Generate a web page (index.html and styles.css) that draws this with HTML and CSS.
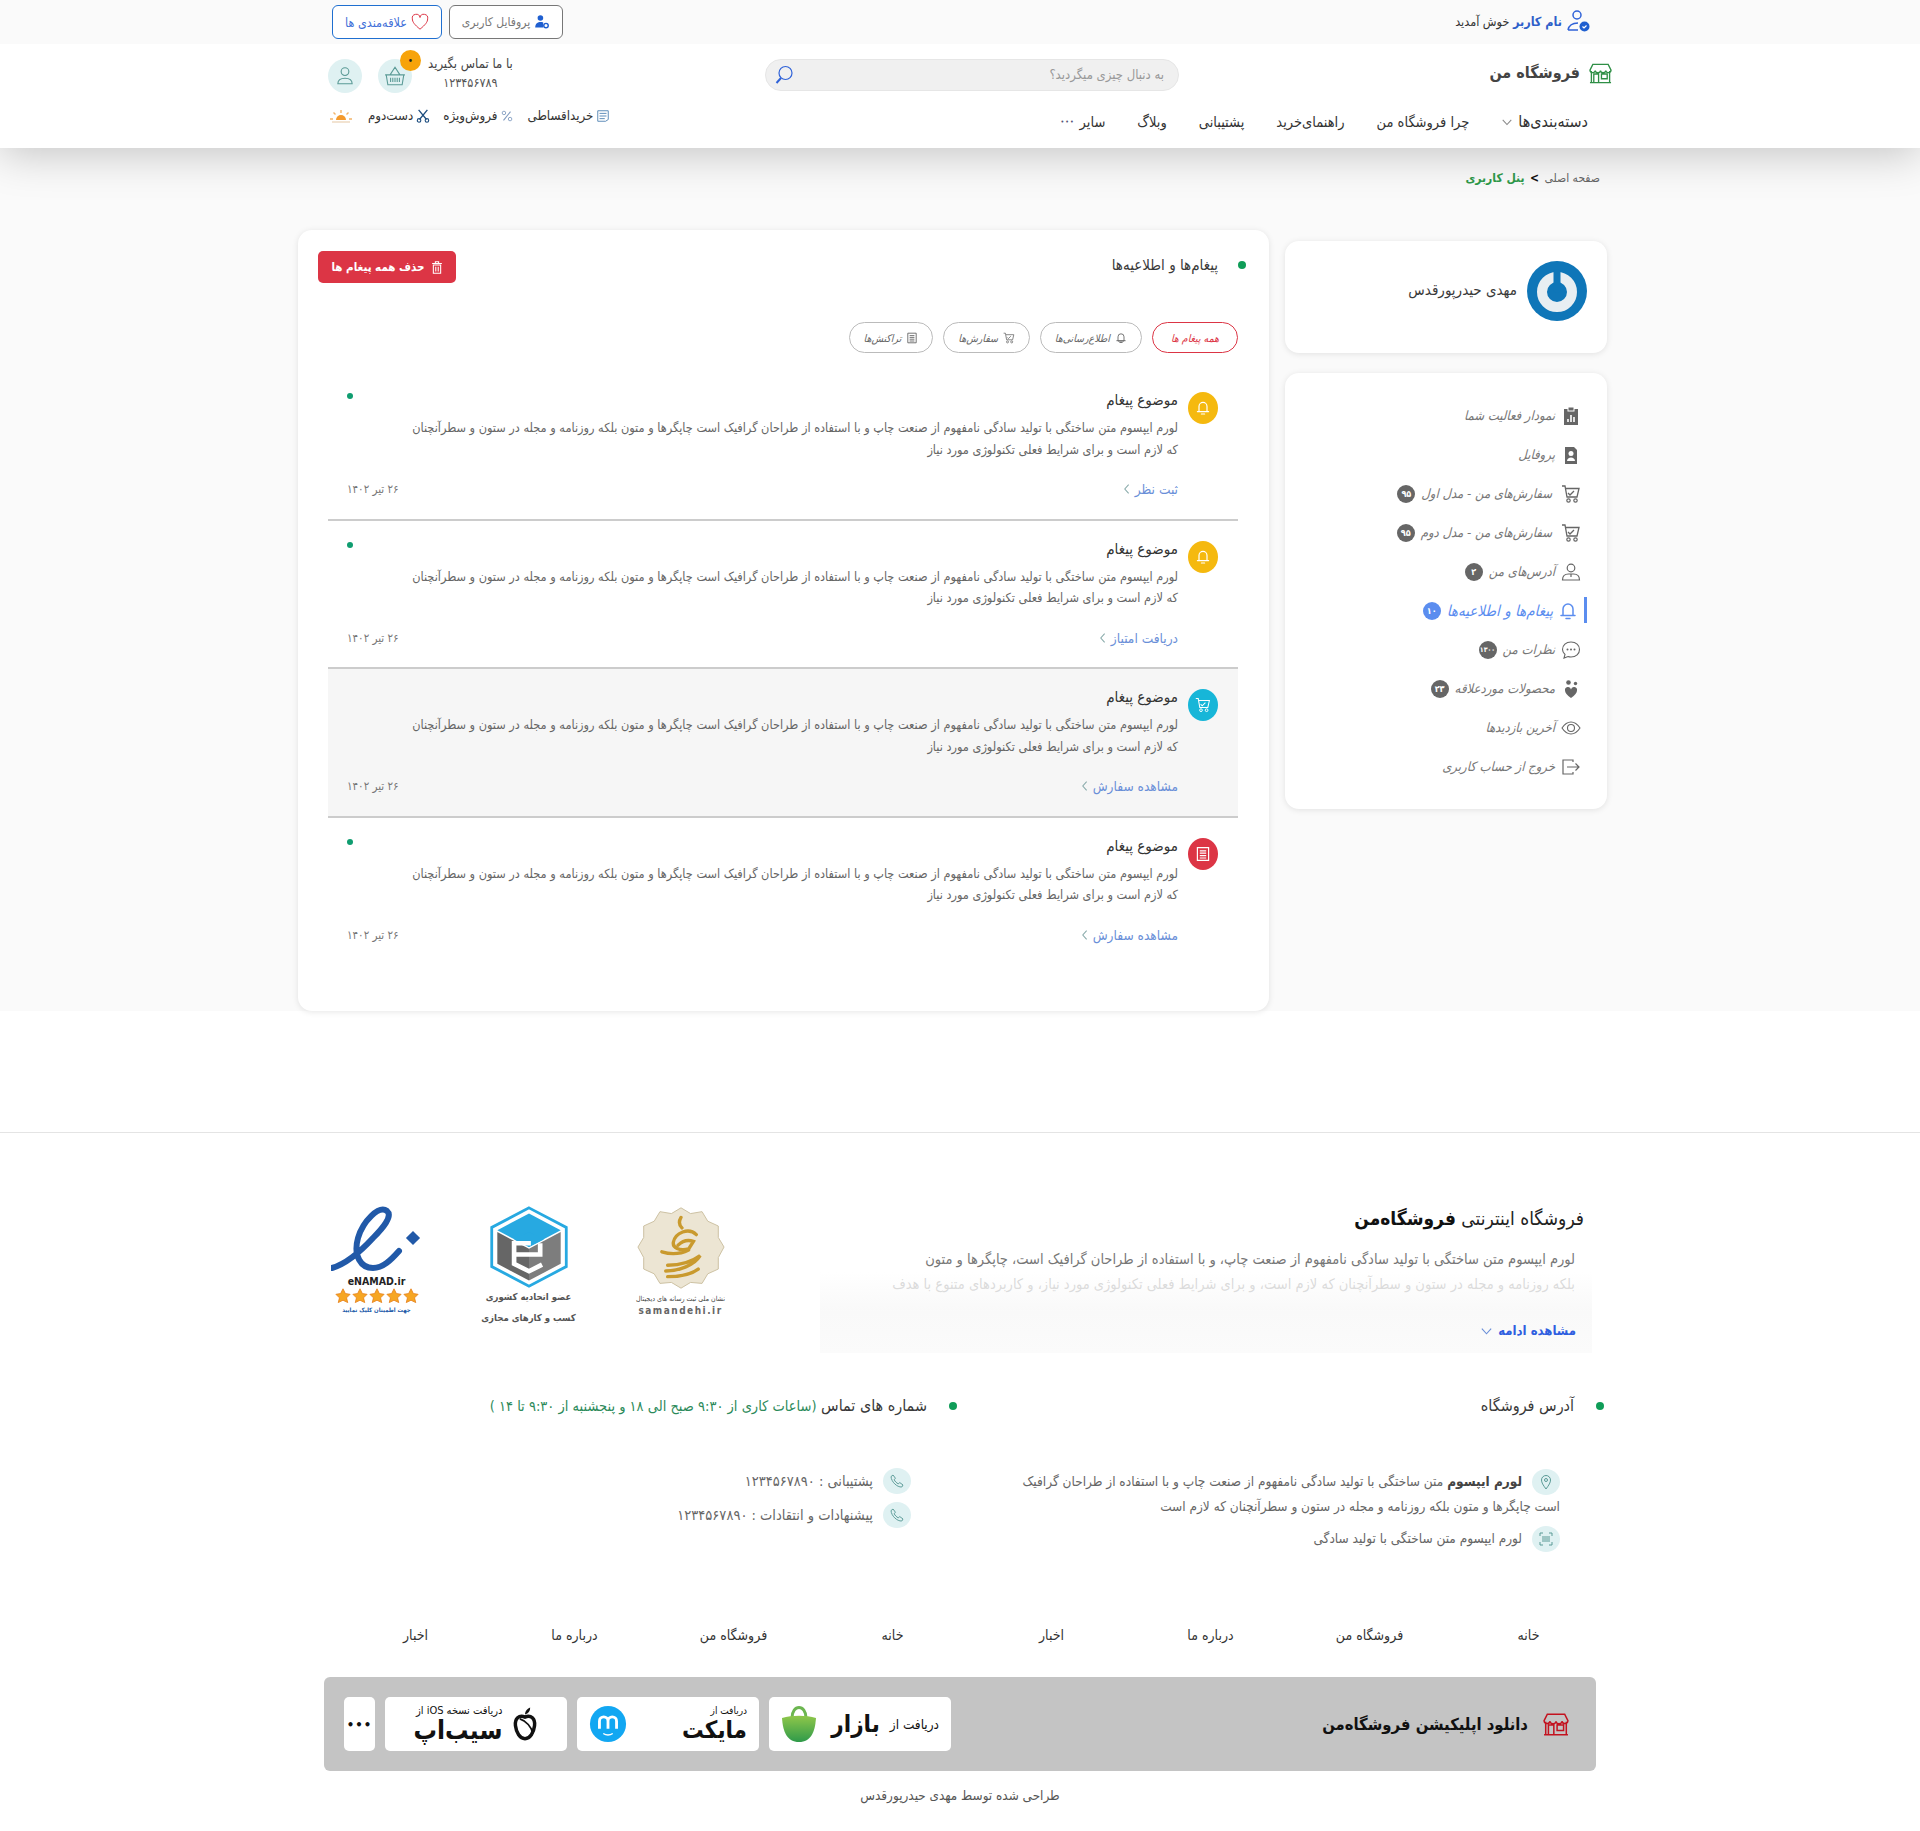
FILE: index.html
```html
<!DOCTYPE html>
<html lang="fa" dir="rtl">
	<head>
	<meta charset="utf-8">
	<title>پنل کاربری</title>
	<link rel="stylesheet" href="styles.css">
	</head>
	<body>
		<svg class="defs" width="0" height="0">
			<symbol id="i-store" viewBox="0 0 24 22"><path d="M1 21h22M2.500 9v12M21.500 9v12M4 2h16l3 6a2.800 2.800 0 0 1-5.500.5 2.800 2.800 0 0 1-5.500 0 2.800 2.800 0 0 1-5.500 0A2.800 2.800 0 0 1 1 8zM5 21v-9h5v9M13 12h6v5h-6z" fill="none" stroke="currentColor" stroke-width="1.400"/></symbol>
			<symbol id="i-bell" viewBox="0 0 20 20"><path d="M5 14.500V8a5 5 0 0 1 10 0v6.500zM3 14.500h14M8 17.500h4" fill="none" stroke="currentColor" stroke-width="1.500" stroke-linecap="round"/></symbol>
			<symbol id="i-cart" viewBox="0 0 20 20"><path d="M1 2h3l2 11h10l2-8.500H5M7 9l2 2 4-4" fill="none" stroke="currentColor" stroke-width="1.300"/><circle cx="7.500" cy="16.500" r="1.700" fill="none" stroke="currentColor" stroke-width="1.200"/><circle cx="14.500" cy="16.500" r="1.700" fill="none" stroke="currentColor" stroke-width="1.200"/></symbol>
			<symbol id="i-receipt" viewBox="0 0 20 20"><path d="M3 2h14v16H3zM6 6h8M6 9h8M6 12h8M6 15h8" fill="none" stroke="currentColor" stroke-width="1.500"/></symbol>
			<symbol id="i-phone" viewBox="0 0 20 20"><path d="M5 2.500l3 4-1.500 2c1 2 3 4 5 5l2-1.500 4 3-1.500 2.500C10 18 3 11 2.500 4.500z" fill="none" stroke="currentColor" stroke-width="1.200" stroke-linejoin="round"/></symbol>
			<symbol id="i-chevron-l" viewBox="0 0 10 14"><path d="M7.500 2L3 7l4.500 5" fill="none" stroke="currentColor" stroke-width="1.200"/></symbol>
			<symbol id="i-chevron-d" viewBox="0 0 14 10"><path d="M2 2.500L7 8l5-5.500" fill="none" stroke="currentColor" stroke-width="1.200"/></symbol>
		</svg>

		<div class="topbar">
			<div class="welcome">
				<svg class="welcome-icon" viewBox="0 0 24 24"><circle cx="11" cy="6" r="4" fill="none" stroke="#2f62d8" stroke-width="1.500"/><path d="M2 21c1-5 5-7 10-7M2 21h10" fill="none" stroke="#2f62d8" stroke-width="1.500"/><circle cx="18.500" cy="17.500" r="5" fill="#1f5fd0"/><path d="M16.500 17.500l1.500 1.500 2.500-2.500" fill="none" stroke="#fff" stroke-width="1.200"/></svg>
				<span><b class="welcome-name">نام کاربر</b> خوش آمدید</span>
			</div>
			<div class="top-btns">
				<a class="top-btn">
					<svg viewBox="0 0 20 20"><circle cx="8" cy="5" r="3.500" fill="#1f5fd0"/><path d="M1.500 17c0-5 3-7 7-7 1 0 2 .2 3 .6V17z" fill="#1f5fd0"/><circle cx="15" cy="14.500" r="2.800" fill="none" stroke="#1f5fd0" stroke-width="1.800"/></svg>
					پروفایل کاربری
				</a>
				<a class="top-btn top-btn-wish">
					<svg viewBox="0 0 20 20"><path d="M10 18C4 13 1.500 10 1.500 6.500A4.300 4.300 0 0 1 10 5a4.300 4.300 0 0 1 8.500 1.500C18.500 10 16 13 10 18z" fill="none" stroke="#dc3545" stroke-width="1.100"/></svg>
					علاقه‌مندی ها
				</a>
			</div>
		</div>

		<header class="header">
			<div class="header-row">
				<div class="logo">
					<svg class="logo-icon"><use href="#i-store"/></svg>
					<span>فروشگاه من</span>
				</div>
				<div class="search">
					<span class="search-text">به دنبال چیزی میگردید؟</span>
					<svg viewBox="0 0 20 20"><circle cx="11.500" cy="8" r="6.500" fill="none" stroke="#2f62d8" stroke-width="1.200"/><path d="M7 13l-4.500 5" stroke="#2f62d8" stroke-width="2"/></svg>
				</div>
				<div class="contact">
					<div class="contact-text">
						<div>با ما تماس بگیرید</div>
						<div class="contact-num">۱۲۳۴۵۶۷۸۹</div>
					</div>
					<div class="round-btn">
						<span class="round-badge">•</span>
						<svg viewBox="0 0 20 20"><path d="M2 9h16l-1.500 9h-13zM5.500 9L10 2l4.500 7M1 9h18M6 11.500v4M8 11.500v4M10 11.500v4M12 11.500v4M14 11.500v4" fill="none" stroke="#5a9a96" stroke-width="1"/></svg>
					</div>
					<div class="round-btn">
						<svg viewBox="0 0 20 20"><circle cx="10" cy="6" r="3.500" fill="none" stroke="#5a9a96" stroke-width="1"/><path d="M3.500 17c0-3 2-5 6.500-5s6.500 2 6.500 5z" fill="none" stroke="#5a9a96" stroke-width="1"/></svg>
					</div>
				</div>
			</div>
			<div class="header-row header-row-nav">
				<nav class="nav">
					<a>دسته‌بندی‌ها <svg class="nav-chev"><use href="#i-chevron-d"/></svg></a>
					<a>چرا فروشگاه من</a>
					<a>راهنمای‌خرید</a>
					<a>پشتیبانی</a>
					<a>وبلاگ</a>
					<a>سایر <span class="nav-more">•••</span></a>
				</nav>
				<div class="subnav">
					<a><svg viewBox="0 0 16 16"><path d="M2 2h12v10l-3 2H2zM4 5h8M4 8h8M4 11h6" fill="none" stroke="#4a7fb0" stroke-width="1"/></svg>خریداقساطی</a>
					<a><svg viewBox="0 0 16 16"><path d="M12 3L4 13" stroke="#7f9abf" stroke-width="1.200"/><circle cx="4.500" cy="4.500" r="2" fill="none" stroke="#7f9abf"/><circle cx="11.500" cy="11.500" r="2" fill="none" stroke="#7f9abf"/></svg>فروش‌ویژه</a>
					<a><svg viewBox="0 0 16 16"><path d="M3 1l9 11M13 1L4 12" stroke="#1f4f80" stroke-width="1.500"/><circle cx="3.500" cy="13" r="2" fill="none" stroke="#1f4f80" stroke-width="1.300"/><circle cx="12.500" cy="13" r="2" fill="none" stroke="#1f4f80" stroke-width="1.300"/></svg>دست‌دوم</a>
					<svg class="sun" viewBox="0 0 22 14"><path d="M6 11a5 5 0 0 1 10 0z" fill="#f49a2c"/><path d="M11 1v3M3.500 3.500l2 2M18.500 3.500l-2 2M0 10h3M19 10h3" stroke="#f2b46a" stroke-width="1.400"/><path d="M2 13h18" stroke="#ecd7bd" stroke-width="1.400"/></svg>
				</div>
			</div>
		</header>

		<main class="main">
			<div class="breadcrumb">صفحه اصلی <b class="crumb-sep">&gt;</b> <b class="crumb-now">پنل کاربری</b></div>
			<div class="panel">
				<aside class="side">
					<div class="card user-card">
						<svg class="avatar" viewBox="0 0 60 60"><circle cx="30" cy="30" r="30" fill="#0f76b8"/><circle cx="30" cy="31" r="15" fill="none" stroke="#e8eef2" stroke-width="10"/><rect x="26.500" y="8" width="7" height="24" rx="3.500" fill="#0f76b8"/></svg>
						<span class="user-name">مهدی حیدرپورقدس</span>
					</div>
					<div class="card menu-card">
						<a class="menu-item"><svg viewBox="0 0 20 20"><path d="M3 3h14v16H3z" fill="#666"/><rect x="7" y="1" width="6" height="4" fill="#666" stroke="#fff"/><path d="M7 16v-3M10 16V9M13 16v-5" stroke="#fff" stroke-width="1.600"/></svg><span>نمودار فعالیت شما</span></a>
						<a class="menu-item"><svg viewBox="0 0 20 20"><path d="M4 2h9l3 3v14H4z" fill="#666"/><circle cx="10" cy="8.500" r="2.500" fill="#fff"/><path d="M6 16c0-2 2-3.500 4-3.500s4 1.500 4 3.500z" fill="#fff"/></svg><span>پروفایل</span></a>
						<a class="menu-item"><svg class="menu-cart"><use href="#i-cart"/></svg><span>سفارش‌های من - مدل اول</span><em class="count">۹۵</em></a>
						<a class="menu-item"><svg class="menu-cart"><use href="#i-cart"/></svg><span>سفارش‌های من - مدل دوم</span><em class="count">۹۵</em></a>
						<a class="menu-item"><svg viewBox="0 0 20 20"><circle cx="10" cy="6" r="3.800" fill="none" stroke="#666" stroke-width="1.200"/><path d="M1.500 18c0-4 2.500-6 6-6h5c3.500 0 6 2 6 6zM10 12v3" fill="none" stroke="#666" stroke-width="1.200"/></svg><span>آدرس‌های من</span><em class="count">۲</em></a>
						<a class="menu-item menu-item-active"><svg class="menu-bell"><use href="#i-bell"/></svg><span>پیغام‌ها و اطلاعیه‌ها</span><em class="count">۱۰</em></a>
						<a class="menu-item"><svg viewBox="0 0 20 20"><path d="M10 2c5 0 8.500 3 8.500 7.500S15 17 10 17c-1 0-2-.1-3-.5L3 18l1-3.500C2.500 13 1.500 11.500 1.500 9.500 1.500 5 5 2 10 2z" fill="none" stroke="#666" stroke-width="1.100"/><circle cx="6.500" cy="9.500" r="1" fill="#666"/><circle cx="10" cy="9.500" r="1" fill="#666"/><circle cx="13.500" cy="9.500" r="1" fill="#666"/></svg><span>نظرات من</span><em class="count count-sm">۱۳۰۰</em></a>
						<a class="menu-item"><svg viewBox="0 0 20 20"><path d="M10 19C6 16 4 14 4 11.500a3 3 0 0 1 6-1 3 3 0 0 1 6 1C16 14 14 16 10 19z" fill="#666"/><circle cx="7.500" cy="3.500" r="2.300" fill="#666"/><circle cx="14.500" cy="4.500" r="1.700" fill="#666"/></svg><span>محصولات موردعلاقه</span><em class="count">۲۳</em></a>
						<a class="menu-item"><svg viewBox="0 0 20 20"><path d="M1 10c3-4.500 5.500-6 9-6s6 1.500 9 6c-3 4.500-5.500 6-9 6s-6-1.500-9-6z" fill="none" stroke="#666" stroke-width="1.100"/><circle cx="10" cy="10" r="3.500" fill="none" stroke="#666" stroke-width="1.100"/></svg><span>آخرین بازدیدها</span></a>
						<a class="menu-item"><svg viewBox="0 0 20 20"><path d="M12 5V3H2v14h10v-2M6 10h12M14.500 6.500L18 10l-3.500 3.500" fill="none" stroke="#666" stroke-width="1.200"/></svg><span>خروج از حساب کاربری</span></a>
					</div>
				</aside>

				<section class="card messages">
					<div class="msg-head">
						<h2 class="dot-title">پیغام‌ها و اطلاعیه‌ها</h2>
						<button class="del-btn"><svg viewBox="0 0 14 16"><path d="M1 3h12M5 3V1h4v2M2.500 5h9v10h-9zM5.500 7v6M8.500 7v6" fill="none" stroke="#fff" stroke-width="1.300"/></svg>حذف همه پیغام ها</button>
					</div>
					<div class="tabs">
						<a class="tab tab-active">همه پیغام ها</a>
						<a class="tab"><svg><use href="#i-bell"/></svg>اطلاع‌رسانی‌ها</a>
						<a class="tab"><svg><use href="#i-cart"/></svg>سفارش‌ها</a>
						<a class="tab"><svg><use href="#i-receipt"/></svg>تراکنش‌ها</a>
					</div>

					<article class="msg">
						<span class="msg-icon msg-icon-yellow"><svg><use href="#i-bell"/></svg></span>
						<div class="msg-body">
							<h3>موضوع پیغام</h3>
							<p>لورم ایپسوم متن ساختگی با تولید سادگی نامفهوم از صنعت چاپ و با استفاده از طراحان گرافیک است چاپگرها و متون بلکه روزنامه و مجله در ستون و سطرآنچنان<br>که لازم است و برای شرایط فعلی تکنولوژی مورد نیاز</p>
							<div class="msg-foot"><a>ثبت نظر <svg><use href="#i-chevron-l"/></svg></a><time>۲۶ تیر ۱۴۰۲</time></div>
						</div>
						<i class="msg-dot"></i>
					</article>
					<article class="msg">
						<span class="msg-icon msg-icon-yellow"><svg><use href="#i-bell"/></svg></span>
						<div class="msg-body">
							<h3>موضوع پیغام</h3>
							<p>لورم ایپسوم متن ساختگی با تولید سادگی نامفهوم از صنعت چاپ و با استفاده از طراحان گرافیک است چاپگرها و متون بلکه روزنامه و مجله در ستون و سطرآنچنان<br>که لازم است و برای شرایط فعلی تکنولوژی مورد نیاز</p>
							<div class="msg-foot"><a>دریافت امتیاز <svg><use href="#i-chevron-l"/></svg></a><time>۲۶ تیر ۱۴۰۲</time></div>
						</div>
						<i class="msg-dot"></i>
					</article>
					<article class="msg msg-read">
						<span class="msg-icon msg-icon-cyan"><svg><use href="#i-cart"/></svg></span>
						<div class="msg-body">
							<h3>موضوع پیغام</h3>
							<p>لورم ایپسوم متن ساختگی با تولید سادگی نامفهوم از صنعت چاپ و با استفاده از طراحان گرافیک است چاپگرها و متون بلکه روزنامه و مجله در ستون و سطرآنچنان<br>که لازم است و برای شرایط فعلی تکنولوژی مورد نیاز</p>
							<div class="msg-foot"><a>مشاهده سفارش <svg><use href="#i-chevron-l"/></svg></a><time>۲۶ تیر ۱۴۰۲</time></div>
						</div>
					</article>
					<article class="msg msg-last">
						<span class="msg-icon msg-icon-red"><svg><use href="#i-receipt"/></svg></span>
						<div class="msg-body">
							<h3>موضوع پیغام</h3>
							<p>لورم ایپسوم متن ساختگی با تولید سادگی نامفهوم از صنعت چاپ و با استفاده از طراحان گرافیک است چاپگرها و متون بلکه روزنامه و مجله در ستون و سطرآنچنان<br>که لازم است و برای شرایط فعلی تکنولوژی مورد نیاز</p>
							<div class="msg-foot"><a>مشاهده سفارش <svg><use href="#i-chevron-l"/></svg></a><time>۲۶ تیر ۱۴۰۲</time></div>
						</div>
						<i class="msg-dot"></i>
					</article>
				</section>
			</div>
		</main>

		<footer class="footer">
			<div class="about">
				<div class="about-text">
					<h2>فروشگاه اینترنتی <b>فروشگاه‌من</b></h2>
					<p>لورم ایپسوم متن ساختگی با تولید سادگی نامفهوم از صنعت چاپ، و با استفاده از طراحان گرافیک است، چاپگرها و متون<br>بلکه روزنامه و مجله در ستون و سطرآنچنان که لازم است، و برای شرایط فعلی تکنولوژی مورد نیاز، و کاربردهای متنوع با هدف</p>
					<div class="about-fade"><a>مشاهده ادامه <svg><use href="#i-chevron-d"/></svg></a></div>
				</div>
				<div class="trust">
					<div class="trust-item">
						<svg viewBox="0 0 92 88" class="trust-sama">
							<polygon points="46,2 56,8 68,6 74,16 85,21 85,33 91,43 85,54 85,66 74,71 68,81 56,80 46,86 36,80 24,81 18,71 7,66 7,54 1,43 7,33 7,21 18,16 24,6 36,8" fill="#ece5d3" stroke="#cbbf9f"/>
							<path d="M46 12c-3 5-2 8 1 11M62 30c-8-8-22-2-24 8-1 6 6 9 16 7l5-8c-6-2-12 0-16 4M26 48c10 3 20 2 28-2M30 68c14 0 30-6 36-16-8 6-20 10-34 10M32 74c12 0 24-2 32-8" fill="none" stroke="#c99a2e" stroke-width="3.500" stroke-linecap="round"/>
						</svg>
						<span class="trust-small">نشان ملی ثبت رسانه های دیجیتال</span>
						<span class="trust-latin">samandehi.ir</span>
					</div>
					<div class="trust-item">
						<svg viewBox="0 0 88 88" class="trust-union">
							<polygon points="44,2 84,23 84,65 44,86 4,65 4,23" fill="#fff" stroke="#27a9e1" stroke-width="3"/>
							<polygon points="44,8 78,26 44,44 10,26" fill="#27a9e1"/>
							<polygon points="10,28 44,46 44,80 10,62" fill="#666"/>
							<polygon points="78,28 44,46 44,80 78,62" fill="#7d7d7d"/>
							<polygon points="44,28 60,36 44,44 28,36" fill="#27a9e1"/>
							<path d="M46 40l-18 0v22l16 8 14-7M30 52h26V40" fill="none" stroke="#fff" stroke-width="5"/>
						</svg>
						<span class="trust-fa">عضو اتحادیه کشوری</span>
						<span class="trust-fa">کسب و کارهای مجازی</span>
					</div>
					<div class="trust-item">
						<svg viewBox="0 0 92 66" class="trust-enamad">
							<path d="M1 62C15 58 30 45 42 32 52 22 62 10 56 5 48-1 32 15 27 32 22 50 30 62 42 62 52 62 60 54 68 45" fill="none" stroke="#2159a8" stroke-width="6" stroke-linecap="round"/>
							<rect x="77" y="27" width="10" height="10" transform="rotate(45 82 32)" fill="#2159a8"/>
						</svg>
						<span class="enamad-name">eNAMAD.ir</span>
						<span class="stars">
							<svg viewBox="0 0 20 19"><polygon points="10,1 13,7 19,8 14.500,12.500 16,18.500 10,15.500 4,18.500 5.500,12.500 1,8 7,7" fill="#f6a623" stroke="#e57f1a"/></svg>
							<svg viewBox="0 0 20 19"><polygon points="10,1 13,7 19,8 14.500,12.500 16,18.500 10,15.500 4,18.500 5.500,12.500 1,8 7,7" fill="#f6a623" stroke="#e57f1a"/></svg>
							<svg viewBox="0 0 20 19"><polygon points="10,1 13,7 19,8 14.500,12.500 16,18.500 10,15.500 4,18.500 5.500,12.500 1,8 7,7" fill="#f6a623" stroke="#e57f1a"/></svg>
							<svg viewBox="0 0 20 19"><polygon points="10,1 13,7 19,8 14.500,12.500 16,18.500 10,15.500 4,18.500 5.500,12.500 1,8 7,7" fill="#f6a623" stroke="#e57f1a"/></svg>
							<svg viewBox="0 0 20 19"><polygon points="10,1 13,7 19,8 14.500,12.500 16,18.500 10,15.500 4,18.500 5.500,12.500 1,8 7,7" fill="#f6a623" stroke="#e57f1a"/></svg>
						</span>
						<span class="enamad-note">جهت اطمینان کلیک نمایید</span>
					</div>
				</div>
			</div>

			<div class="info">
				<div class="info-col">
					<h3 class="dot-title">آدرس فروشگاه</h3>
					<div class="addr">
						<p class="addr-line"><span class="info-icon info-icon-float"><svg viewBox="0 0 16 16"><path d="M8 15C5 11 3.500 8.500 3.500 6a4.500 4.500 0 0 1 9 0c0 2.500-1.500 5-4.500 9z" fill="none" stroke="#5a9a96"/><circle cx="8" cy="6" r="1.500" fill="none" stroke="#5a9a96"/></svg></span><b>لورم ایپسوم</b> متن ساختگی با تولید سادگی نامفهوم از صنعت چاپ و با استفاده از طراحان گرافیک است چاپگرها و متون بلکه روزنامه و مجله در ستون و سطرآنچنان که لازم است</p>
						<p class="addr-line addr-line-2"><span class="info-icon info-icon-float"><svg viewBox="0 0 16 16"><path d="M2 5V2h3M11 2h3v3M14 11v3h-3M5 14H2v-3" fill="none" stroke="#5a9a96"/><path d="M5 5v6M7 5v6M9 5v6M11 5v6" stroke="#5a9a96"/></svg></span>لورم ایپسوم متن ساختگی با تولید سادگی</p>
					</div>
				</div>
				<div class="info-col">
					<h3 class="dot-title">شماره های تماس <span class="hours">(ساعات کاری از ۹:۳۰ صبح الی ۱۸ و پنجشنبه از ۹:۳۰ تا ۱۴ )</span></h3>
					<div class="phones">
						<div class="phone"><span class="info-icon"><svg><use href="#i-phone"/></svg></span>پشتیبانی : ۱۲۳۴۵۶۷۸۹۰</div>
						<div class="phone"><span class="info-icon"><svg><use href="#i-phone"/></svg></span>پیشنهادات و انتقادات : ۱۲۳۴۵۶۷۸۹۰</div>
					</div>
				</div>
			</div>

			<div class="links">
				<a>خانه</a><a>فروشگاه من</a><a>درباره ما</a><a>اخبار</a><a>خانه</a><a>فروشگاه من</a><a>درباره ما</a><a>اخبار</a>
			</div>

			<div class="appbar">
				<div class="app-title">
					<svg><use href="#i-store"/></svg>
					<span>دانلود اپلیکیشن فروشگاه‌من</span>
				</div>
				<div class="app-btns">
					<a class="app-btn app-bazaar">
						<span class="app-small">دریافت از</span>
						<b class="app-name">بازار</b>
						<svg viewBox="0 0 36 38"><defs><linearGradient id="bag" x1="0" y1="0" x2="0" y2="1"><stop offset="0" stop-color="#8fc74a"/><stop offset="1" stop-color="#2f9a4a"/></linearGradient></defs><path d="M11 13c0-14 14-14 14 0" fill="none" stroke="#6cb650" stroke-width="3"/><path d="M1 13c10-3 24-3 34 0-1 14-5 24-17 24S2 27 1 13z" fill="url(#bag)"/></svg>
					</a>
					<a class="app-btn app-myket">
						<span class="app-stack"><span class="app-tiny">دریافت از</span><b class="app-name">مایکت</b></span>
						<svg viewBox="0 0 40 40"><circle cx="20" cy="20" r="19" fill="#12a7f2"/><path d="M11 25V17a4 4 0 0 1 9 0v8M20 17a4 4 0 0 1 9 0v8" fill="none" stroke="#fff" stroke-width="3"/><path d="M15 30c3 2 7 2 10 0" fill="none" stroke="#fff" stroke-width="1.500"/></svg>
					</a>
					<a class="app-btn app-sib">
						<svg viewBox="0 0 30 40"><path d="M15 12C22 9 27 14 26 22c-1 8-5 15-11 15S5 30 4 22C3 14 8 9 15 12z" fill="none" stroke="#111" stroke-width="4"/><path d="M9 14c7 2 14 10 15 17" fill="none" stroke="#111" stroke-width="2"/><path d="M15 9c0-4 3-7 6-8 0 4-2 7-6 8z" fill="#111"/></svg>
						<span class="app-stack"><span class="app-tiny app-tiny-sib">دریافت نسخه iOS از</span><b class="app-name">سیب‌اپ</b></span>
					</a>
					<a class="app-btn app-more">•••</a>
				</div>
			</div>

			<div class="copyright">طراحی شده توسط مهدی حیدرپورقدس</div>
		</footer>
	</body>
</html>
```

FILE: styles.css
```css
html, body {
	margin: 0;
	padding: 0;
}
body {
	background: #fff;
	font-family: "DejaVu Sans", sans-serif;
	font-stretch: condensed;
	font-size: 12px;
	color: #333;
	height: 1831px;
	overflow-x: hidden;
}
a { color: inherit; text-decoration: none; }
h2, h3, p { margin: 0; font-weight: normal; }
svg { display: block; flex: none; }
.defs { position: absolute; }

/* top bar */
.topbar {
	position: relative;
	z-index: 3;
	height: 44px;
	background: #fafafa;
	display: flex;
	justify-content: space-between;
	align-items: flex-start;
	padding: 0 330px 0 332px;
}
.welcome {
	display: flex;
	align-items: center;
	gap: 4px;
	padding-top: 8px;
	color: #333;
	font-size: 12.500px;
}
.welcome-icon { width: 24px; height: 26px; }
.welcome-name { color: #2f5fc9; }
.top-btns { display: flex; gap: 7px; padding-top: 5px; }
.top-btn {
	height: 34px;
	width: 114px;
	box-sizing: border-box;
	display: flex;
	align-items: center;
	justify-content: center;
	gap: 4px;
	border: 1px solid #777;
	border-radius: 6px;
	font-size: 12px;
	color: #777;
	background: #fff;
}
.top-btn svg { width: 16px; height: 16px; }
.top-btn-wish {
	border-color: #1f6fd0;
	color: #3f6fd8;
	width: 110px;
	font-size: 12.500px;
}
.top-btn-wish svg { width: 18px; height: 18px; }

/* header */
.header {
	position: relative;
	z-index: 2;
	height: 104px;
	background: #fff;
	box-shadow: 0 6px 44px rgba(0, 0, 0, .22);
	padding: 0 308px 0 328px;
}
.header-row {
	display: flex;
	justify-content: space-between;
	align-items: center;
}
.header-row:first-child { height: 57px; padding-top: 4px; box-sizing: border-box; }
.logo {
	display: flex;
	align-items: center;
	gap: 9px;
	font-size: 16px;
	font-weight: bold;
	width: 190px;
	color: #444;
	margin-top: -4px;
}
.logo-icon { width: 23px; height: 22px; color: #2f8f46; }
.search {
	width: 414px;
	height: 32px;
	box-sizing: border-box;
	border: 1px solid #e6e6e6;
	background: #f0f0f0;
	border-radius: 16px;
	display: flex;
	align-items: center;
	justify-content: space-between;
	padding: 0 14px 0 8px;
	color: #999;
	font-size: 13px;
}
.search svg { width: 20px; height: 20px; }
.contact {
	width: 194px;
	display: flex;
	justify-content: flex-end;
	align-items: center;
	gap: 16px;
	margin-top: 3px;
}
.contact-text {
	text-align: center;
	font-size: 13px;
	line-height: 19px;
	margin-top: -6px;
	color: #444;
}
.contact-num { font-size: 12.500px; color: #555; }
.round-btn {
	position: relative;
	width: 34px;
	height: 34px;
	border-radius: 50%;
	background: #dff1f2;
	display: flex;
	align-items: center;
	justify-content: center;
}
.round-btn svg { width: 22px; height: 22px; }
.round-badge {
	position: absolute;
	top: -9px;
	left: 22px;
	width: 21px;
	height: 21px;
	border-radius: 50%;
	background: #f7a30a;
	text-align: center;
	line-height: 21px;
	font-size: 10px;
	color: #222;
}
.header-row-nav { padding-right: 24px; padding-top: 2px; align-items: flex-start; }
.nav {
	display: flex;
	align-items: center;
	gap: 32px;
	font-size: 14.500px;
	color: #333;
	padding-top: 9px;
}
.nav a { display: flex; align-items: center; gap: 5px; }
.nav a:first-child { font-size: 16px; }
.nav-chev { width: 12px; height: 10px; color: #888; }
.nav-more { font-size: 7px; color: #557; letter-spacing: 1px; }
.subnav {
	display: flex;
	align-items: center;
	gap: 13px;
	font-size: 13.200px;
	color: #333;
	padding-top: 5px;
	padding-left: 2px;
}
.subnav a { display: flex; align-items: center; gap: 3px; }
.subnav svg { width: 14px; height: 14px; }
.subnav .sun { width: 22px; height: 14px; margin-right: 3px; }

/* main */
.main {
	background: #fafafa;
	height: 863px;
	padding: 0 313px 0 298px;
}
.breadcrumb {
	padding: 23px 7px 0 0;
	height: 82px;
	box-sizing: border-box;
	font-size: 12px;
	color: #666;
}
.crumb-sep { color: #111; margin: 0 2px; }
.crumb-now { color: #2f9a4a; }
.panel { display: flex; gap: 16px; align-items: flex-start; }
.side {
	width: 322px;
	flex: none;
	margin-top: 11px;
	display: flex;
	flex-direction: column;
	gap: 20px;
}
.card {
	background: #fff;
	border-radius: 14px;
	box-shadow: 0 1px 6px rgba(0, 0, 0, .1);
}
.user-card {
	height: 112px;
	box-sizing: border-box;
	padding: 20px 20px 0 0;
	display: flex;
	align-items: flex-start;
	gap: 10px;
}
.avatar { width: 60px; height: 60px; }
.user-name { font-size: 15px; margin-top: 20px; color: #3a3a3a; }
.menu-card {
	height: 436px;
	box-sizing: border-box;
	padding: 23px 0 0 0;
}
.menu-item {
	position: relative;
	height: 39px;
	display: flex;
	align-items: center;
	padding-right: 26px;
	font-style: italic;
	color: #777;
	font-size: 13px;
}
.menu-item > svg { width: 20px; height: 20px; margin-left: 6px; }
.menu-item > .menu-cart { color: #666; margin-left: 9px; }
.menu-item > .menu-bell { color: #5b8def; margin-right: 3px; margin-left: 5px; }
.menu-item-active { color: #5b8def; font-size: 15px; }
.menu-item-active::after {
	content: "";
	position: absolute;
	right: 20px;
	top: 6px;
	width: 3px;
	height: 26px;
	background: #5b8def;
}
.count {
	margin-right: 6px;
	min-width: 18px;
	height: 18px;
	border-radius: 9px;
	background: #666;
	color: #fff;
	font-size: 9px;
	font-style: normal;
	font-weight: bold;
	text-align: center;
	line-height: 18px;
}
.count-sm { font-size: 7px; }
.menu-item-active .count { background: #5b8def; }

/* messages card */
.messages {
	flex: 1;
	height: 781px;
	box-sizing: border-box;
	padding: 21px 31px 0 30px;
}
.msg-head {
	display: flex;
	justify-content: space-between;
	align-items: flex-start;
}
.dot-title {
	position: relative;
	padding-right: 20px;
	font-size: 15px;
	color: #3a3a3a;
	line-height: 28px;
}
.dot-title::before {
	content: "";
	position: absolute;
	right: -8px;
	top: 10px;
	width: 8px;
	height: 8px;
	border-radius: 50%;
	background: #0f9d58;
}
.del-btn {
	width: 138px;
	height: 32px;
	margin-left: -10px;
	background: #dc3545;
	border: none;
	border-radius: 5px;
	color: #fff;
	font-family: inherit;
	font-stretch: inherit;
	font-size: 11.500px;
	font-weight: bold;
	display: flex;
	align-items: center;
	justify-content: center;
	gap: 6px;
}
.del-btn svg { width: 12px; height: 13px; }
.tabs {
	display: flex;
	gap: 10px;
	margin-top: 39px;
	margin-bottom: 19px;
}
.tab {
	height: 31px;
	box-sizing: border-box;
	border: 1px solid #bbb;
	border-radius: 16px;
	display: flex;
	align-items: center;
	justify-content: center;
	gap: 5px;
	padding: 0 14px;
	font-size: 10.500px;
	font-style: italic;
	color: #666;
}
.tab svg { width: 12px; height: 12px; }
.tab-active { border-color: #dc3545; color: #dc3545; width: 86px; padding: 0; }
.msg {
	position: relative;
	height: 148.500px;
	box-sizing: border-box;
	border-bottom: 2px solid #ccc;
	padding: 18px 20px 0 19px;
	display: flex;
	gap: 10px;
}
.msg-last { border-bottom: none; }
.msg-read { background: #f6f6f6; }
.msg-icon {
	width: 30px;
	height: 32px;
	flex: none;
	margin-top: 2px;
	border-radius: 50%;
	display: flex;
	align-items: center;
	justify-content: center;
	color: #fff;
}
.msg-icon svg { width: 16px; height: 16px; }
.msg-icon-yellow { background: #f5b90f; }
.msg-icon-cyan { background: #17b6d8; }
.msg-icon-red { background: #dc3545; }
.msg-body { flex: 1; }
.msg-body h3 { font-size: 15px; line-height: 20px; color: #333; }
.msg-body p {
	margin-top: 7px;
	font-size: 12.600px;
	line-height: 21.500px;
	color: #666;
}
.msg-foot {
	display: flex;
	justify-content: space-between;
	align-items: center;
	margin-top: 19px;
	height: 20px;
	font-size: 13.600px;
}
.msg-foot a { display: flex; align-items: center; gap: 4px; color: #6a8fd8; }
.msg-foot svg { width: 9px; height: 12px; color: #8aa; }
.msg-foot time { font-size: 11.500px; color: #777; }
.msg-dot {
	position: absolute;
	left: 19px;
	top: 21px;
	width: 6px;
	height: 6px;
	border-radius: 50%;
	background: #0f9d70;
}

/* footer */
.footer { border-top: 1px solid #e4e4e4; margin-top: 121px; }
.about {
	display: flex;
	justify-content: space-between;
	padding: 72px 328px 0 330px;
	height: 189px;
	box-sizing: border-box;
}
.about-text { position: relative; width: 772px; }
.about-text h2 { font-size: 19px; line-height: 26px; color: #222; padding-right: 8px; }
.about-text h2 b { color: #111; }
.about-text p {
	margin-top: 16px;
	padding-right: 17px;
	font-size: 14.500px;
	line-height: 25px;
	color: #777;
}
.about-fade {
	position: absolute;
	top: 67px;
	left: 0;
	right: 0;
	height: 81px;
	background: linear-gradient(rgba(255, 255, 255, .7), rgba(250, 250, 250, .78) 30%, #f9f9f9 50%, #fbfbfb);
	padding: 51px 16px 0 0;
	box-sizing: border-box;
	color: #2f5fe0;
	font-weight: bold;
	font-size: 13px;
}
.about-fade a { display: flex; align-items: center; gap: 5px; }
.about-fade svg { width: 13px; height: 10px; color: #6a8fd8; }
.trust {
	display: flex;
	gap: 59px;
	margin-top: 0;
}
.trust-item {
	width: 93px;
	display: flex;
	flex-direction: column;
	align-items: center;
}
.trust-sama { width: 88px; height: 86px; }
.trust-union { width: 82px; height: 84px; margin-bottom: -3px; }
.trust-enamad { width: 92px; height: 68px; }
.trust-small { font-size: 7px; color: #444; margin-top: 4px; white-space: nowrap; }
.trust-latin { font-size: 10px; letter-spacing: 1.500px; color: #666; font-weight: bold; margin-top: 2px; }
.trust-fa { font-size: 9.500px; font-weight: bold; color: #555; line-height: 21px; white-space: nowrap; }
.enamad-name { font-size: 10.500px; font-weight: bold; color: #222; margin-top: 2px; }
.stars { display: flex; direction: ltr; gap: 1px; margin-top: 1px; }
.stars svg { width: 16px; height: 15px; }
.enamad-note { font-size: 6px; font-weight: bold; color: #2159a8; margin-top: 3px; white-space: nowrap; }

.info {
	display: flex;
	padding: 70px 313px 0 313px;
	height: 303px;
	box-sizing: border-box;
}
.info-col { width: 647px; flex: none; }
.info-col .dot-title { font-size: 16px; padding-right: 33px; }
.info-col .dot-title::before { right: 3px; }
.hours { color: #2c8a5a; font-size: 14.500px; }
.addr {
	margin: 49px 47px 0 0;
	width: 545px;
	font-size: 13.500px;
	line-height: 25px;
	color: #666;
}
.addr b { color: #444; }
.addr-line-2 { margin-top: 7px; }
.info-icon {
	width: 28px;
	height: 26px;
	border-radius: 50%;
	background: #dff1f2;
	display: flex;
	align-items: center;
	justify-content: center;
	color: #5a9a96;
	flex: none;
}
.info-icon svg { width: 16px; height: 16px; }
.info-icon-float { float: right; margin: 0 0 -4px 10px; }
.phones { margin: 44px 49px 0 0; color: #666; font-size: 14.500px; }
.phone { display: flex; align-items: center; gap: 10px; height: 34px; }
.links {
	display: grid;
	grid-template-columns: repeat(8, 159px);
	margin: 0 312px 0 0;
	text-align: center;
	font-size: 14px;
	color: #333;
	line-height: 20px;
	height: 52px;
}
.appbar {
	margin: 0 324px;
	height: 94px;
	box-sizing: border-box;
	background: #c4c4c4;
	border-radius: 6px;
	display: flex;
	justify-content: space-between;
	align-items: center;
	padding: 0 27px 0 20px;
}
.app-title {
	display: flex;
	align-items: center;
	gap: 15px;
	font-size: 16.500px;
	font-weight: bold;
	color: #111;
}
.app-title svg { width: 26px; height: 24px; color: #c3121f; }
.app-btns { display: flex; gap: 10px; }
.app-btn {
	width: 182px;
	height: 54px;
	box-sizing: border-box;
	background: #fff;
	border-radius: 5px;
	display: flex;
	align-items: center;
	padding: 0 12px;
	gap: 10px;
	color: #111;
}
.app-small { font-size: 13.500px; }
.app-tiny { font-size: 10px; display: block; }
.app-tiny-sib { font-size: 11px; }
.app-name { font-size: 24px; font-weight: bold; line-height: 26px; display: block; }
.app-stack { line-height: 12px; }
.app-bazaar svg { width: 36px; height: 38px; margin-right: auto; }
.app-myket { justify-content: space-between; }
.app-myket svg { width: 38px; height: 38px; }
.app-sib { justify-content: center; gap: 10px; }
.app-sib svg { width: 26px; height: 36px; }
.app-sib .app-name { font-size: 26px; }
.app-more {
	width: 31px;
	padding: 0;
	justify-content: center;
	font-size: 13px;
	font-weight: bold;
	letter-spacing: 1px;
}
.copyright {
	text-align: center;
	font-size: 13.400px;
	color: #555;
	margin-top: 16px;
	line-height: 18px;
}
```
